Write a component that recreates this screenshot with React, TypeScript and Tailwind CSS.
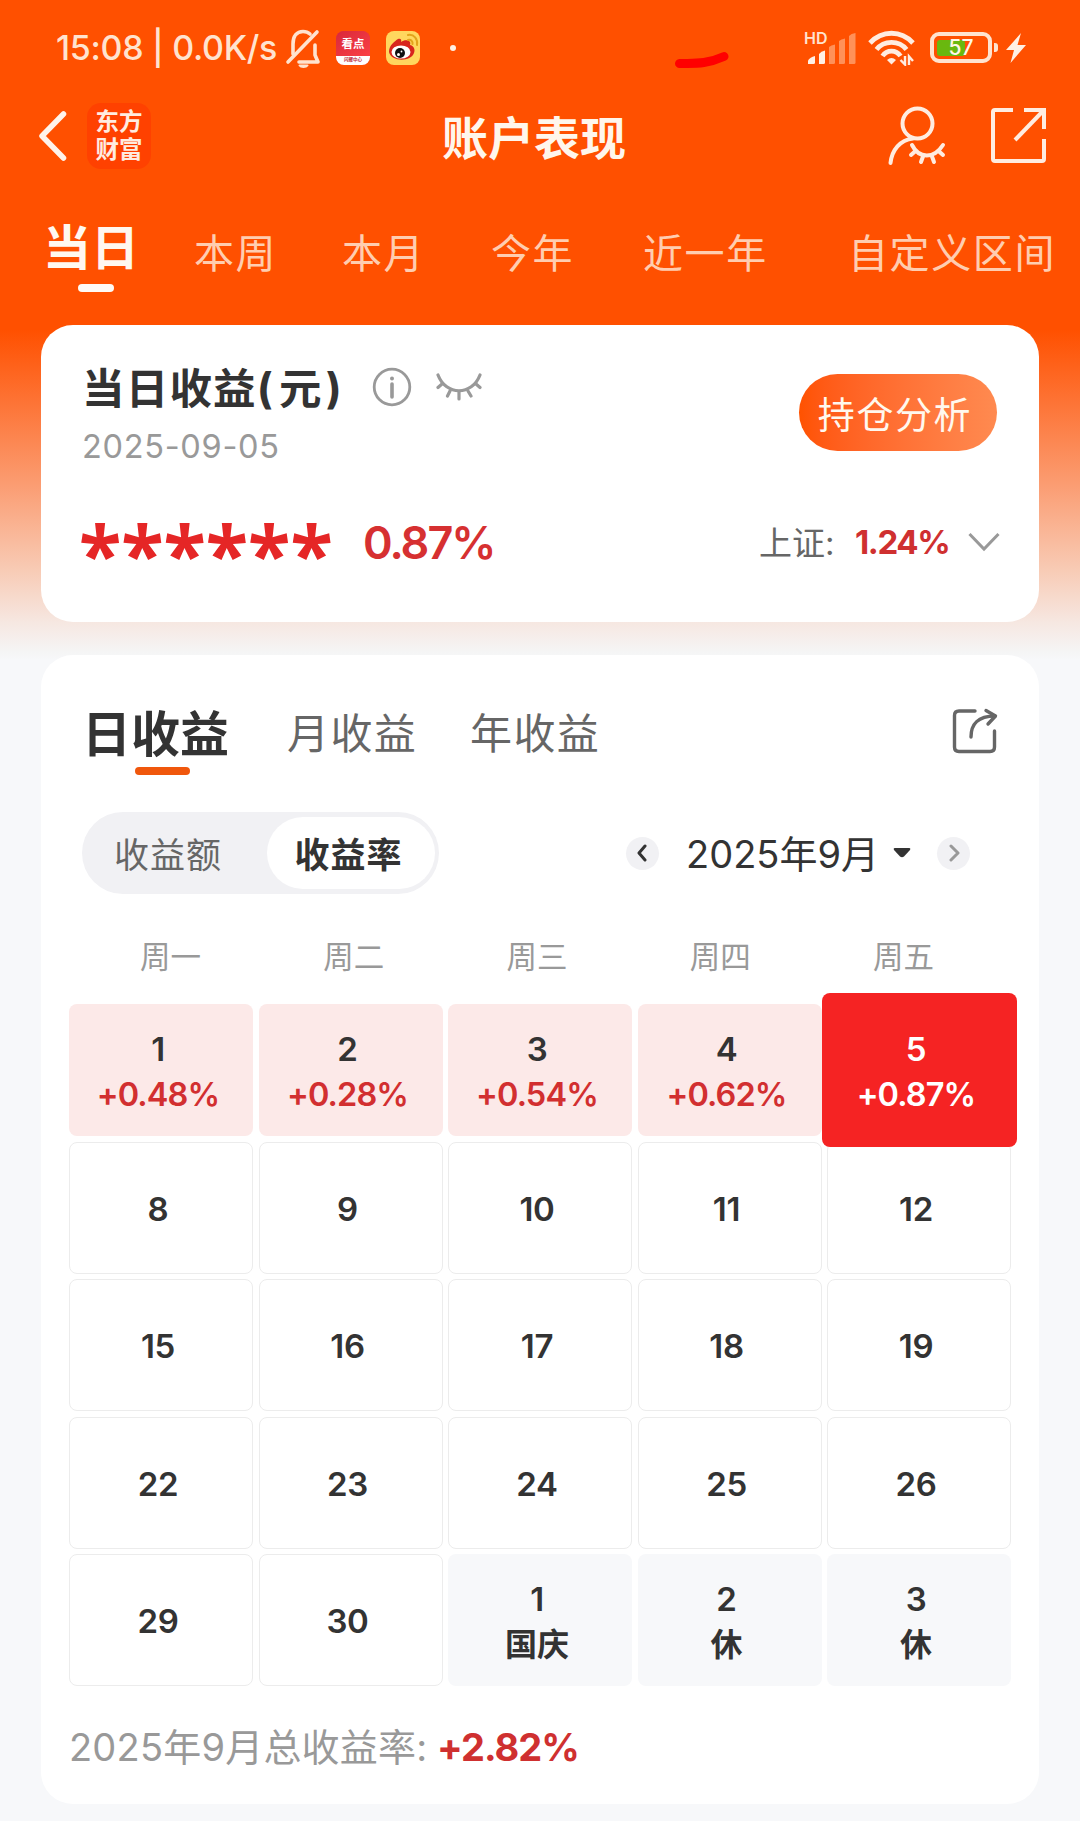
import type { ReactNode } from 'react'
import clsx from 'clsx'

interface Day {
  day: number
  rate?: string
  note?: string
  active?: boolean
}

const ranges = [
  { label: '本周', className: 'ml-[58px] w-[83px]' },
  { label: '本月', className: 'ml-[65px] w-[83px]' },
  { label: '今年', className: 'ml-[66px] w-[83px]' },
  { label: '近一年', className: 'ml-[69px] w-[125px]' },
  { label: '自定义区间', className: 'ml-[80px] w-[210px]' },
]

const weekdays = ['周一', '周二', '周三', '周四', '周五']

const days: Day[] = [
  { day: 1, rate: '+0.48%' },
  { day: 2, rate: '+0.28%' },
  { day: 3, rate: '+0.54%' },
  { day: 4, rate: '+0.62%' },
  { day: 5, rate: '+0.87%', active: true },
  ...[8, 9, 10, 11, 12, 15, 16, 17, 18, 19, 22, 23, 24, 25, 26, 29, 30].map((day) => ({ day })),
  { day: 1, note: '国庆' },
  { day: 2, note: '休' },
  { day: 3, note: '休' },
]

function StatusBar() {
  return (
    <div className="flex h-[95px] items-center pl-[56px] text-[#ffe3cf]">
      <span className="w-[228px] whitespace-nowrap text-[34px] font-medium leading-none tracking-[-0.3px]">
        15:08 | 0.0K/s
      </span>
      <svg className="ml-[1px]" width="37" height="40" viewBox="0 0 37 40" fill="none" stroke="currentColor" strokeWidth="3.600" strokeLinecap="round" strokeLinejoin="round">
        <path d="M3 34 L32 4" />
        <path d="M8 26 V16 C8 8 12 3.500 18 3.500 C21 3.500 23 4.200 25 6" />
        <path d="M14 34 H33 L30 27 V17" />
        <path d="M14.500 37.500 H22.500 C21 39.500 16 39.500 14.500 37.500Z" strokeWidth="2" fill="currentColor" />
      </svg>
      <div className="ml-[14px] flex h-[34px] w-[34px] flex-col overflow-hidden rounded-[8px] bg-[#e8343f]">
        <span className="flex h-[25px] items-center justify-center bg-gradient-to-br from-[#d9283a] to-[#fb4046] pt-[4px] text-[11.5px] font-bold leading-none text-white">
          看点
        </span>
        <span className="flex h-[9px] items-center justify-center bg-white text-[4.5px] font-bold leading-none text-[#c02a3a]">
          闪耀中心
        </span>
      </div>
      <svg className="ml-[16px]" width="34" height="34" viewBox="0 0 34 34">
        <rect width="34" height="34" rx="8" fill="#ffd75e" />
        <path d="M3 21 C3 14 9 10 12 8 C14 7 16 8 15 11 C19 8 26 9 24 14 C29 15 29 20 28 22 C25 31 5 31 3 21Z" fill="#d8251d" />
        <ellipse cx="15" cy="21" rx="9.500" ry="6.600" fill="#fff" />
        <circle cx="14" cy="22" r="5" fill="#111" />
        <circle cx="12.500" cy="23.500" r="1.500" fill="#fff" />
        <circle cx="15.500" cy="20.500" r="0.900" fill="#fff" />
        <path d="M22 4 C28 3 32 8 31 14 M22 9 C25 8 27 10.500 26.500 13" stroke="#e2a31c" strokeWidth="2" fill="none" strokeLinecap="round" />
      </svg>
      <span className="ml-[30px] h-[6px] w-[6px] rounded-full bg-[#fff0e4]" />
      <svg className="ml-[219px] mt-[24px]" width="54" height="18" viewBox="0 0 54 18">
        <path d="M4.500 12.500 C18 12 30 14 49 5.500" stroke="#ff0000" strokeWidth="9" strokeLinecap="round" fill="none" />
      </svg>
      {/* Mobile signal */}
      <div className="relative ml-[78px] h-[34px] w-[50px]">
        <span className="absolute left-[-3px] top-[-1px] text-[16px] font-semibold leading-none">HD</span>
        <svg className="absolute inset-0" width="50" height="34" viewBox="0 0 50 34" fill="#fff0e4">
          <path d="M1 33 V29.500 Q3 26 8 25 V31.500 Q8 33 6.500 33Z" />
          <path d="M12 33 V23 Q14 20 18 19.500 V31.500 Q18 33 16.500 33Z" />
          <g fill="#ff9159">
            <path d="M22 33 V16 Q24 14 28 13.500 V31.500 Q28 33 26.500 33Z" />
            <path d="M32 33 V10 Q34 8 38 7.500 V31.500 Q38 33 36.500 33Z" />
            <path d="M42 33 V5 Q44 2.500 48.500 2 V31.500 Q48.500 33 47 33Z" />
          </g>
        </svg>
      </div>
      <svg className="ml-[11px]" width="47" height="36" viewBox="0 0 47 36" fill="none" stroke="#ffece0" strokeWidth="4.800">
        <path d="M2 13 C14 0 33 0 45 13" />
        <path d="M8.500 19.500 C16 10 31 10 38.500 19.500" />
        <path d="M14.500 26 C19 19.500 28 19.500 32.500 26" />
        <path d="M19 30 Q23.500 26 28 30 L23.500 34.500Z" fill="#ffece0" stroke="none" />
        <path d="M37 26 V34.500 L32.500 30 M41 35 V26.500 L45 31" strokeWidth="2.400" />
      </svg>
      <div className="relative ml-[15px] flex h-[31px] w-[62px] items-center rounded-[9px] border-[4px] border-[#ffe3cf]">
        <span className="ml-[3px] h-[16px] w-[28px] rounded-[3px] bg-[#69b80f]" />
        <span className="absolute inset-0 flex items-center justify-center text-[21px] font-medium leading-none text-[#fff6e8]">
          57
        </span>
      </div>
      <span className="ml-[2px] h-[9px] w-[4px] rounded-r-[3px] bg-[#ffe3cf]" />
      <svg className="ml-[8px]" width="20" height="30" viewBox="0 0 20 30" fill="#fff0e4">
        <path d="M15 0 L0 17 H8 L4.500 30 L20 12 H11.500Z" />
      </svg>
    </div>
  )
}

function NavBar() {
  return (
    <div className="flex h-[81px] items-center">
      <svg className="ml-[38px]" width="30" height="50" viewBox="0 0 30 50" fill="none" stroke="#fff3ea" strokeWidth="5.500" strokeLinecap="round" strokeLinejoin="round">
        <path d="M25.500 3 L4 25 L25.500 47" />
      </svg>
      <div className="ml-[19px] flex h-[66px] w-[64px] flex-col items-center justify-center rounded-[14px] bg-[#ff4100] text-[23.5px] font-bold text-[#ffece0]">
        <span className="block h-[28px] leading-[23px]">东方</span>
        <span className="block h-[23px] leading-[23px]">财富</span>
      </div>
      <h1 className="ml-[291px] mt-[4px] w-[189px] whitespace-nowrap text-[46px] font-bold leading-none text-[#fff6ec]">账户表现</h1>
      <svg className="ml-[256px]" width="60" height="60" viewBox="0 0 60 60" fill="none" stroke="#ffece0" strokeWidth="4" strokeLinecap="round">
        <circle cx="30.500" cy="17.500" r="15" />
        <path d="M26 32.500 C13 34 5 44 3.500 57" />
        <path d="M25 39 C32 53 47 53 56 39" />
        <path d="M28.500 45 L24 49 M36 50.500 L34 56 M45 50.500 L47 56 M51.500 45 L56 49" />
      </svg>
      <svg className="ml-[43px]" width="57" height="57" viewBox="0 0 57 57" fill="none" stroke="#ffece0" strokeWidth="4" strokeLinecap="butt" strokeLinejoin="round">
        <path d="M23 3 H5 Q3 3 3 5 V52 Q3 54 5 54 H52 Q54 54 54 52 V32" />
        <path d="M34 3 H54 V22" strokeLinejoin="miter" />
        <path d="M54 3 L25 33" />
      </svg>
    </div>
  )
}

function RangeTabs() {
  return (
    <div className="flex h-[149px] pl-[43px]">
      <div className="flex w-[93px] flex-col pt-[48px]">
        <span className="whitespace-nowrap text-[48px] font-bold leading-[48px] text-[#fff8f0]">当日</span>
        <span className="ml-[35px] mt-[12px] h-[8px] w-[36px] shrink-0 rounded-[4px] bg-[#fffaf5]" />
      </div>
      {ranges.map((range) => (
        <span
          key={range.label}
          className={clsx('whitespace-nowrap pt-[57px] text-[40px] leading-[41px] tracking-[1.6px] text-[#ffcdb0]', range.className)}
        >
          {range.label}
        </span>
      ))}
    </div>
  )
}

function SummaryCard() {
  return (
    <section className="mx-[41px] h-[297px] rounded-[32px] bg-white">
      <div className="flex h-[146px] justify-between pl-[41px] pr-[42px]">
        <div className="pt-[39px]">
          <div className="flex h-[46px] items-center">
            <h2 className="mt-[4px] w-[259px] whitespace-nowrap text-[42.5px] font-bold leading-none tracking-[1.2px] text-[#333]">
              当日收益<span className="pr-[5px]">(</span>元<span className="pl-[3px]">)</span>
            </h2>
            <svg className="ml-[31px]" width="40" height="40" viewBox="0 0 40 40" fill="none" stroke="#999" strokeWidth="2.800">
              <circle cx="20" cy="20" r="17.800" />
              <path d="M20 17 V30" strokeWidth="3.600" strokeLinecap="round" />
              <circle cx="20" cy="11.500" r="2" fill="#999" stroke="none" />
            </svg>
            <svg className="ml-[24px]" width="46" height="30" viewBox="0 0 46 30" fill="none" stroke="#999" strokeWidth="3.200" strokeLinecap="round">
              <path d="M2 3 C10 24 36 24 44 3" />
              <path d="M6 12 L2 15.500 M14 19 L11.500 24 M23 20 V27 M32 19 L35 24 M40 12 L44 15.500" />
            </svg>
          </div>
          <p className="mt-[20px] text-[32.5px] leading-[34px] tracking-[0.7px] text-[#999]">2025-09-05</p>
        </div>
        <button className="mt-[49px] flex h-[77px] w-[198px] items-center justify-center rounded-full bg-gradient-to-r from-[#ff5200] to-[#ff8a50] pr-[6px] pt-[5px] text-[37px] leading-none tracking-[1.6px] text-[#fff8ee]">
          持仓分析
        </button>
      </div>
      <div className="flex h-[144px] items-center pl-[38px]">
        <span className="mt-[20px] w-[284px] whitespace-nowrap font-['Noto_Sans',sans-serif] text-[78px] font-bold leading-none text-[#e52626]">
          ******
        </span>
        <span className="-mt-[2px] w-[140px] whitespace-nowrap text-[45px] font-semibold leading-none tracking-[-2px] text-[#d63031]">0.87%</span>
        <span className="ml-[256px] w-[90px] whitespace-nowrap text-[33px] leading-none text-[#666]">上证:</span>
        <span className="-mt-[2px] ml-[6px] w-[104px] whitespace-nowrap text-[33px] font-bold leading-none tracking-[-1.4px] text-[#cf3030]">1.24%</span>
        <svg className="ml-[9px] -mt-[2px]" width="32" height="20" viewBox="0 0 32 20" fill="none" stroke="#999" strokeWidth="3">
          <path d="M1.500 2 L16 17 L30.500 2" />
        </svg>
      </div>
    </section>
  )
}

function RoundButton({ className, children }: { className?: string; children: ReactNode }) {
  return (
    <button className={clsx('flex h-[33px] w-[33px] items-center justify-center rounded-full bg-[#f1f1f4]', className)}>
      <svg width="14" height="18" viewBox="0 0 14 18" fill="none" stroke="currentColor" strokeWidth="3" strokeLinecap="round" strokeLinejoin="round">
        {children}
      </svg>
    </button>
  )
}

function DayCell({ day, rate, note, active }: Day) {
  return (
    <div
      className={clsx(
        'relative flex h-[132px] flex-col items-center justify-center rounded-[8px] pr-[6px] pt-[3px] text-[33px] font-semibold leading-[45px]',
        rate && !active && 'bg-[#fce9e8] text-[#333]',
        active && 'z-10 text-white',
        note && 'bg-[#f7f8fa] text-[#333]',
        !rate && !note && 'border border-[#ececec] text-[#333]'
      )}
    >
      {/* The selected day grows over its neighbours */}
      {active && <span className="absolute -bottom-[11px] -left-[5px] -right-[6px] -top-[11px] rounded-[8px] bg-[#f52323]" />}
      <span className="relative tracking-[-0.3px]">{day}</span>
      {rate && (
        <span className={clsx('relative text-[32.5px] tracking-[-0.9px]', active ? 'text-white' : 'text-[#d22f30]')}>{rate}</span>
      )}
      {note && <span className="text-[32px]">{note}</span>}
    </div>
  )
}

function CalendarCard() {
  return (
    <section className="mx-[41px] mt-[33px] h-[1149px] rounded-[32px] bg-white">
      <div className="flex h-[157px] pl-[41px]">
        <div className="w-[155px] pt-[56px]">
          <span className="block whitespace-nowrap text-[49px] font-bold leading-[48px] text-[#333]">日收益</span>
          <span className="ml-[53px] mt-[8px] block h-[8px] w-[55px] rounded-[4px] bg-[#f0570c]" />
        </div>
        <span className="ml-[50px] w-[134px] whitespace-nowrap pt-[57px] text-[42px] leading-[44px] tracking-[1.4px] text-[#666]">月收益</span>
        <span className="ml-[49px] w-[134px] whitespace-nowrap pt-[57px] text-[42px] leading-[44px] tracking-[1.4px] text-[#666]">年收益</span>
        <svg className="ml-[348px] mt-[53px]" width="46" height="47" viewBox="0 0 46 47" fill="none" stroke="#666" strokeWidth="3.400" strokeLinecap="round" strokeLinejoin="round">
          <path d="M23 3 H7 Q2.500 3 2.500 7.500 V39 Q2.500 43.500 7 43.500 H38 Q42.500 43.500 42.500 39 V23" />
          <path d="M19 29 C19 16 26 8 43 8" />
          <path d="M34 2.500 L43.500 8 L36 16" />
        </svg>
      </div>

      <div className="flex h-[82px] items-center pl-[41px]">
        <div className="flex h-[82px] w-[357px] items-center rounded-full bg-[#f1f1f4]">
          <span className="w-[185px] pl-[32px] pt-[4px] text-[35px] leading-none tracking-[1px] text-[#666]">收益额</span>
          <span className="flex h-[72px] w-[168px] items-center justify-center rounded-full bg-white pr-[5px] pt-[4px] text-[35px] font-bold leading-none tracking-[1px] text-[#333]">
            收益率
          </span>
        </div>
        <RoundButton className="ml-[187px] text-[#333]">
          <path d="M9 2 L3 9 L9 16" />
        </RoundButton>
        <span className="ml-[27px] mt-[2px] w-[194px] whitespace-nowrap text-[38px] leading-none text-[#333]">2025年9月</span>
        <svg className="ml-[13px]" width="18" height="10" viewBox="0 0 18 10" fill="#333">
          <path d="M1.500 0 H16.500 Q18 0.500 17 2 L11 8.500 Q9 10 7 8.500 L1 2 Q0 0.500 1.500 0Z" />
        </svg>
        <RoundButton className="ml-[26px] text-[#999]">
          <path d="M4 2 L11 9 L4 16" />
        </RoundButton>
      </div>

      <div className="ml-[38px] mt-[43px] grid h-[40px] w-[916px] grid-cols-5">
        {weekdays.map((name) => (
          <span key={name} className="text-center text-[30.5px] leading-[40px] text-[#999]">
            {name}
          </span>
        ))}
      </div>

      <div className="ml-[28px] mt-[27px] grid w-[942px] grid-cols-5 gap-[5.5px]">
        {days.map((item, index) => (
          <DayCell key={index} {...item} />
        ))}
      </div>

      <p className="ml-[28px] mt-[35px] flex h-[52px] items-center whitespace-nowrap text-[38px] leading-none text-[#999]">
        <span className="w-[368px] tracking-[0.2px]">2025年9月总收益率:</span>
        <span className="font-bold tracking-[-1px] text-[#cf3030]">+2.82%</span>
      </p>
    </section>
  )
}

export default function App() {
  return (
    <main className="h-[1821px] w-[1080px] overflow-hidden bg-[#f7f8fa] bg-[linear-gradient(to_bottom,#ff5000_0px,#ff5000_330px,#fb9b70_482px,#f8cbb5_570px,#f6e7e1_622px,#f5f5f5_652px,#f7f8fa_660px)] font-[Inter,'Noto_Sans_CJK_SC',sans-serif]">
      <StatusBar />
      <NavBar />
      <RangeTabs />
      <SummaryCard />
      <CalendarCard />
    </main>
  )
}
